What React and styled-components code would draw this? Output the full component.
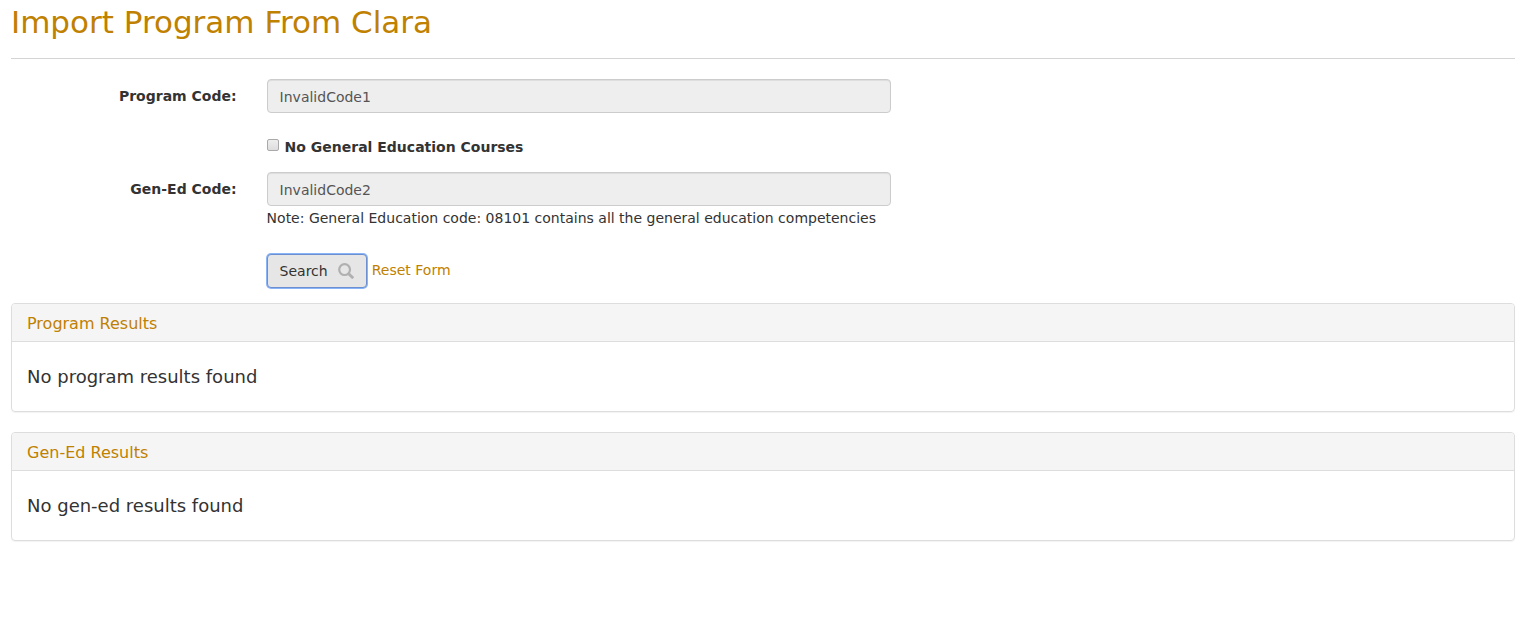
import React from 'react';
import styled, { createGlobalStyle } from 'styled-components';

const GlobalStyle = createGlobalStyle`
  *, *::before, *::after { box-sizing: border-box; }
  body {
    margin: 0;
    background: #fff;
    color: #333;
    font-family: Verdana, "DejaVu Sans", sans-serif;
    font-size: 14px;
    line-height: 20px;
  }
`;

const Page = styled.main`
  padding: 0 8px 20px 11px;
`;

const Title = styled.h1`
  margin: 0 0 20px;
  padding: 5px 0 18px;
  border-bottom: 1px solid #d4d4d4;
  color: #c08000;
  font-size: 31px;
  font-weight: 400;
  line-height: 35px;
`;

const Form = styled.form`
  display: grid;
  grid-template-columns: 15% minmax(0, 624px);
  column-gap: 30px;
`;

const Label = styled.label`
  padding-top: 7px;
  text-align: right;
  font-weight: 700;
`;

const Field = styled.div`
  grid-column: 2;
  margin-bottom: ${(p) => p.$gap || 0}px;
`;

const TextInput = styled.input`
  display: block;
  width: 100%;
  height: 34px;
  padding: 7px 12px 5px;
  border: 1px solid #ccc;
  border-radius: 4px;
  background: #eee;
  box-shadow: inset 0 1px 1px rgba(0, 0, 0, 0.075);
  color: #555;
  font: inherit;
`;

const CheckLabel = styled.label`
  display: flex;
  align-items: center;
  gap: 5px;
  font-weight: 700;
`;

const CheckBox = styled.input`
  appearance: none;
  width: 12px;
  height: 12px;
  margin: 0 1px 4px 0;
  border: 1px solid #a9a9a9;
  border-radius: 2px;
  background: linear-gradient(#eee, #ddd);
`;

const Note = styled.p`
  margin: 2px 0 0;
`;

const Actions = styled(Field)`
  display: flex;
  align-items: center;
  gap: 5px;
`;

const SearchButton = styled.button`
  display: flex;
  align-items: center;
  gap: 10px;
  height: 34px;
  padding: 0 12px;
  border: 1px solid #6b8fd0;
  border-radius: 4px;
  background: #e6e6e6;
  box-shadow: 0 0 0 1px #8ab4f8;
  color: #333;
  font: inherit;
`;

const ResetLink = styled.a`
  padding-bottom: 2px;
  color: #c08000;
  text-decoration: none;
`;

const Panel = styled.section`
  margin-bottom: 20px;
  border: 1px solid #ddd;
  border-radius: 4px;
  box-shadow: 0 1px 1px rgba(0, 0, 0, 0.05);
`;

const PanelTitle = styled.h2`
  margin: 0;
  padding: 11px 15px 9px;
  border-bottom: 1px solid #ddd;
  border-radius: 3px 3px 0 0;
  background: #f5f5f5;
  color: #c08000;
  font-size: 16px;
  font-weight: 400;
  line-height: 17px;
`;

const PanelText = styled.p`
  margin: 0;
  padding: 25px 15px 24px;
  font-size: 18px;
  line-height: 20px;
`;

function SearchIcon() {
  return (
    <svg width="16" height="16" viewBox="0 0 16 16" fill="none" stroke="#b0b0b0" aria-hidden="true">
      <circle cx="6.6" cy="6.6" r="5.4" strokeWidth="2.2" />
      <path d="M10.4 10.4L15.2 15.2" strokeWidth="2.8" />
    </svg>
  );
}

function ResultPanel({ title, children }) {
  return (
    <Panel>
      <PanelTitle>{title}</PanelTitle>
      <PanelText>{children}</PanelText>
    </Panel>
  );
}

export default function App() {
  return (
    <>
      <GlobalStyle />
      <Page>
        <Title>Import Program From Clara</Title>
        <Form onSubmit={(e) => e.preventDefault()}>
          <Label htmlFor="program">Program Code:</Label>
          <Field $gap={24}>
            <TextInput id="program" defaultValue="InvalidCode1" readOnly />
          </Field>
          <Field $gap={15}>
            <CheckLabel>
              <CheckBox type="checkbox" disabled />
              No General Education Courses
            </CheckLabel>
          </Field>
          <Label htmlFor="gened">Gen-Ed Code:</Label>
          <Field $gap={26}>
            <TextInput id="gened" defaultValue="InvalidCode2" readOnly />
            <Note>Note: General Education code: 08101 contains all the general education competencies</Note>
          </Field>
          <Actions $gap={15}>
            <SearchButton type="submit">Search <SearchIcon /></SearchButton>
            <ResetLink href="#">Reset Form</ResetLink>
          </Actions>
        </Form>
        <ResultPanel title="Program Results">No program results found</ResultPanel>
        <ResultPanel title="Gen-Ed Results">No gen-ed results found</ResultPanel>
      </Page>
    </>
  );
}
